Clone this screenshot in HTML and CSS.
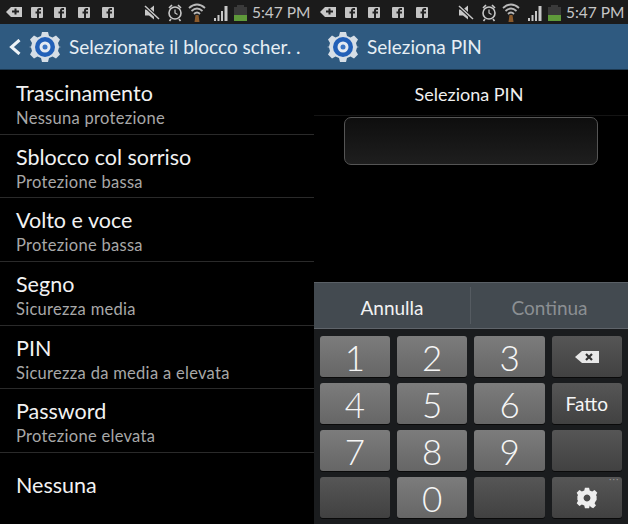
FILE: index.html
```html
<!DOCTYPE html>
<html lang="it">
<head>
    <meta charset="UTF-8">
    <meta name="viewport" content="width=device-width, initial-scale=1.0">
    <title>Blocco schermo</title>
    <link rel="stylesheet" href="styles.css">
</head>
<body>
    <svg class="defs" width="0" height="0">
        <defs>
            <symbol id="i-status" viewBox="0 0 184 24">
                <!-- notifica + -->
                <path d="M6 12l5-5h11v10H11z" fill="#c9c9c9"/>
                <path d="M12 10.500h2.500V8.500h2v2H19v2h-2.500v2h-2v-2H12z" fill="#222"/>
                <!-- facebook x4 -->
                <g fill="#c4c4c4">
                    <rect x="31" y="7" width="12" height="11" rx="1"/>
                    <rect x="54" y="7" width="12" height="11" rx="1"/>
                    <rect x="78" y="7" width="12" height="11" rx="1"/>
                    <rect x="102" y="7" width="12" height="11" rx="1"/>
                </g>
                <g fill="none" stroke="#222" stroke-width="2">
                    <path d="M41 9h-1.500q-1.500 0-1.500 1.500V18M35.500 12.500H41"/>
                    <path d="M64 9h-1.500q-1.500 0-1.500 1.500V18M58.500 12.500H64"/>
                    <path d="M88 9h-1.500q-1.500 0-1.500 1.500V18M82.500 12.500H88"/>
                    <path d="M112 9h-1.500q-1.500 0-1.500 1.500V18M106.500 12.500H112"/>
                </g>
                <!-- muto -->
                <path d="M145 9.500h4l5-4v14l-5-4h-4z" fill="#c8c8c8"/>
                <path d="M145 6l14 13" stroke="#1a1a1a" stroke-width="3.500"/>
                <path d="M145 6l14 13" stroke="#c8c8c8" stroke-width="1.500"/>
                <!-- sveglia -->
                <circle cx="175" cy="13" r="6" fill="none" stroke="#c8c8c8" stroke-width="1.600"/>
                <path d="M175 9.500V13l2.500 1.500" fill="none" stroke="#c8c8c8" stroke-width="1.200"/>
                <path d="M169 8l3-3M181 8l-3-3M171 19l-1.500 2M179 19l1.500 2" stroke="#c8c8c8" stroke-width="1.600"/>
            </symbol>
            <symbol id="i-status-2" viewBox="0 0 64 24">
                <!-- wifi -->
                <path d="M1 8q8-7 16 0M3.500 11q5.500-5 11 0M6 14q3-3 6 0" fill="none" stroke="#b9b9b9" stroke-width="1.800"/>
                <path d="M7.500 15h3l1 7h-5z" fill="#8a5a2c"/>
                <!-- segnale -->
                <path d="M26 21v-3h2v3zM29.500 21v-6h2v6zM33 21v-10h2v10zM36.500 21V6h3v15z" fill="#c8c8c8"/>
                <!-- batteria -->
                <rect x="46" y="7" width="13" height="14" fill="#3a3a3a"/>
                <rect x="49" y="5" width="7" height="2" fill="#3a3a3a"/>
                <rect x="46" y="15" width="13" height="6" fill="#5f9a3a"/>
            </symbol>
            <symbol id="i-gear" viewBox="0 0 32 32">
                <path d="M13 1h6l1 4 3.500 1.500 3.500-2 4 4-2 3.500L30 15.500l2 .5-2 .5-1 3.500 2 3.500-4 4-3.500-2L20 27l-1 4h-6l-1-4-3.500-1.500-3.500 2-4-4 2-3.500L2 16.500 0 16l2-.5 1-3.500-2-3.500 4-4 3.500 2L12 5z" fill="#d6dee6"/>
                <circle cx="16" cy="16" r="10" fill="#2260b8"/>
                <circle cx="16" cy="16" r="5.500" fill="#e4eaf2"/>
                <circle cx="16" cy="16" r="2.500" fill="#3a74c4"/>
            </symbol>
        </defs>
    </svg>

    <div class="phones">
        <!-- schermata sinistra: lista blocco schermo -->
        <section class="screen">
            <div class="status-bar">
                <svg class="status-icons" width="184" height="24"><use href="#i-status"/></svg>
                <svg class="status-icons-2" width="64" height="24"><use href="#i-status-2"/></svg>
                <span class="clock">5:47 PM</span>
            </div>
            <header class="action-bar">
                <svg class="back" width="12" height="16" viewBox="0 0 12 16"><path d="M10.500 1L2.500 8l8 7" fill="none" stroke="#eef3f7" stroke-width="3"/></svg>
                <svg class="gear" width="32" height="32"><use href="#i-gear"/></svg>
                <span class="bar-title">Selezionate il blocco scher. .</span>
            </header>
            <ul class="lock-list">
                <li class="lock-item"><div class="lock-name">Trascinamento</div><div class="lock-level">Nessuna protezione</div></li>
                <li class="lock-item"><div class="lock-name">Sblocco col sorriso</div><div class="lock-level">Protezione bassa</div></li>
                <li class="lock-item"><div class="lock-name">Volto e voce</div><div class="lock-level">Protezione bassa</div></li>
                <li class="lock-item"><div class="lock-name">Segno</div><div class="lock-level">Sicurezza media</div></li>
                <li class="lock-item"><div class="lock-name">PIN</div><div class="lock-level">Sicurezza da media a elevata</div></li>
                <li class="lock-item"><div class="lock-name">Password</div><div class="lock-level">Protezione elevata</div></li>
                <li class="lock-item single"><div class="lock-name">Nessuna</div></li>
            </ul>
        </section>

        <!-- schermata destra: inserimento PIN -->
        <section class="screen">
            <div class="status-bar">
                <svg class="status-icons" width="184" height="24"><use href="#i-status"/></svg>
                <svg class="status-icons-2" width="64" height="24"><use href="#i-status-2"/></svg>
                <span class="clock">5:47 PM</span>
            </div>
            <header class="action-bar plain">
                <svg class="gear" width="32" height="32"><use href="#i-gear"/></svg>
                <span class="bar-title">Seleziona PIN</span>
            </header>
            <div class="pin-area">
                <div class="pin-label">Seleziona PIN</div>
                <div class="pin-field"></div>
            </div>
            <div class="keypad-panel">
                <div class="pin-actions">
                    <div class="pin-action">Annulla</div>
                    <div class="pin-action off">Continua</div>
                </div>
                <div class="keypad">
                    <div class="key">1</div>
                    <div class="key">2</div>
                    <div class="key">3</div>
                    <div class="key dark">
                        <svg width="26" height="14" viewBox="0 0 26 14"><path d="M1 7l7-6h17v12H8z" fill="#e8e8e8"/><path d="M12 4l6 6M18 4l-6 6" stroke="#333" stroke-width="2.200"/></svg>
                    </div>
                    <div class="key">4</div>
                    <div class="key">5</div>
                    <div class="key">6</div>
                    <div class="key dark word">Fatto</div>
                    <div class="key">7</div>
                    <div class="key">8</div>
                    <div class="key">9</div>
                    <div class="key dark"></div>
                    <div class="key dark"></div>
                    <div class="key">0</div>
                    <div class="key dark"></div>
                    <div class="key dark settings">
                        <span class="more">&middot;&middot;&middot;</span>
                        <svg width="22" height="22" viewBox="0 0 32 32"><path fill-rule="evenodd" d="M13 1h6l1 4 3.500 1.500 3.500-2 4 4-2 3.500L30 13v6l-1 1-2 3.500 2 3.500-4 4-3.500-2L20 27l-1 4h-6l-1-4-3.500-1.500-3.500 2-4-4 2-3.500L2 19v-6l1-1-2-3.500 4-4 3.500 2L12 5zM16 11a5 5 0 1 0 .01 0z" fill="#eee"/></svg>
                    </div>
                </div>
            </div>
        </section>
    </div>
</body>
</html>
```

FILE: styles.css
```css
body {
    margin: 0;
    background: #000;
    font-family: "Lato", "Noto Sans", sans-serif;
    overflow: hidden;
}

.defs {
    display: block;
    height: 0;
}

.phones {
    display: flex;
    width: 628px;
    height: 524px;
}

.screen {
    display: flex;
    flex-direction: column;
    width: 314px;
    height: 524px;
}

.status-bar {
    display: flex;
    align-items: center;
    height: 24px;
    background: #1b1b1b;
    flex-shrink: 0;
}

.status-icons {
    flex-shrink: 0;
}

.status-icons-2 {
    flex-shrink: 0;
    margin-left: 4px;
}

.clock {
    color: #c6c6c6;
    font-size: 15.500px;
    white-space: nowrap;
}

.action-bar {
    display: flex;
    align-items: center;
    height: 46px;
    padding-left: 9px;
    background: #2f5a80;
    border-bottom: 1px solid #1c3850;
    box-sizing: border-box;
    flex-shrink: 0;
}

.action-bar.plain {
    padding-left: 13px;
}

.back {
    margin-right: 8px;
}

.gear {
    flex-shrink: 0;
    margin-right: 8px;
}

.bar-title {
    color: #e6eef4;
    font-size: 19px;
    white-space: nowrap;
}

.lock-list {
    list-style: none;
    margin: 0;
    padding: 1px 0 0;
    flex: 1;
}

.lock-item {
    height: 63.700px;
    box-sizing: border-box;
    padding: 10px 0 0 16px;
    border-bottom: 1px solid #2a2a2a;
}

.lock-item.single {
    border-bottom: none;
    padding-top: 20px;
}

.lock-name {
    color: #f2f2f2;
    font-size: 21.500px;
    line-height: 25px;
}

.lock-level {
    color: #a8a8a8;
    font-size: 16.500px;
    letter-spacing: 0.300px;
    line-height: 24px;
}

.pin-area {
    flex: 1;
}

.pin-label {
    height: 46px;
    line-height: 48px;
    text-align: center;
    color: #efefef;
    font-size: 18px;
    padding-right: 4px;
    border-bottom: 1px solid #141414;
    box-sizing: border-box;
}

.pin-field {
    height: 48px;
    margin: 1px 30px 0;
    border: 1px solid #555;
    border-radius: 7px;
    background: linear-gradient(#0e0e0e, #1e1e1e);
    box-sizing: border-box;
}

.keypad-panel {
    height: 242px;
    flex-shrink: 0;
    background: #1a1c1e;
}

.pin-actions {
    display: flex;
    height: 47px;
    background: #434a50;
    border-top: 1px solid #5a6066;
    border-bottom: 1px solid #5f646a;
    box-sizing: border-box;
}

.pin-action {
    flex: 0 0 156px;
    text-align: center;
    color: #f2f2f2;
    font-size: 19px;
    border-right: 1px solid #555b61;
    margin: 4px 0;
    line-height: 42px;
}

.pin-action.off {
    flex: 1;
    border-right: none;
    color: #8b8f93;
}

.keypad {
    display: grid;
    grid-template-columns: repeat(4, 70.500px);
    grid-auto-rows: 41px;
    column-gap: 6.800px;
    row-gap: 6px;
    padding: 7px 0 0 5.700px;
}

.key {
    display: flex;
    align-items: center;
    justify-content: center;
    position: relative;
    border-radius: 3px;
    background: linear-gradient(#7c7c7c, #666);
    box-shadow: 0 1px 0 #0a0a0a;
    color: #f6f6f6;
    font-size: 35px;
    font-weight: 300;
}

.key.dark {
    background: linear-gradient(#565656, #414141);
}

.key.word {
    font-size: 19px;
    font-weight: 400;
}

.more {
    position: absolute;
    top: -6px;
    right: 3px;
    color: #9a9a9a;
    font-size: 12px;
    letter-spacing: 0.500px;
}
```
